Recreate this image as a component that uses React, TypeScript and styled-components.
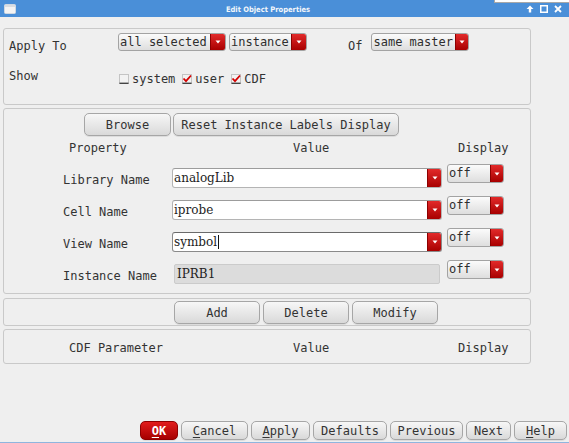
import React from "react";
import styled, { createGlobalStyle } from "styled-components";

const GlobalStyle = createGlobalStyle`
  html, body { margin: 0; padding: 0; background: #efefef; }
  body { font-family: "DejaVu Sans Mono", monospace; font-size: 12px; color: #333; }
`;

const Window = styled.div`
  width: 569px;
  height: 443px;
  box-sizing: border-box;
  display: flex;
  flex-direction: column;
  background: #efefef;
  border-bottom: 1px solid #8fb5de;
  position: relative;
  overflow: hidden;
`;

const TitleBar = styled.div`
  flex: none;
  height: 17px;
  background: #4a8fd8;
  display: flex;
  align-items: center;
  padding: 0 7px 0 4px;
  position: relative;
`;

const TitleText = styled.div`
  flex: 1;
  text-align: center;
  color: #f2f6fb;
  font-family: "DejaVu Sans", sans-serif;
  font-stretch: condensed;
  font-weight: bold;
  font-size: 7.5px;
  padding-top: 2px;
  padding-right: 6px;
`;

const TitleIcons = styled.div`
  display: flex;
  gap: 6px;
  align-items: center;
`;

const BehindStrip = styled.div`
  position: absolute;
  top: 0;
  left: 494px;
  right: 0;
  height: 2px;
  background: #ffffff;
  border-bottom: 1px solid #a8a8a8;
  border-left: 1px solid #a8a8a8;
`;

const Content = styled.div`
  display: flex;
  flex-direction: column;
  padding: 11px 38px 0 3px;
`;

const Panel = styled.div<{ $h: number; $mt?: number; $pt?: number }>`
  height: ${(p) => p.$h}px;
  margin-top: ${(p) => p.$mt ?? 0}px;
  padding-top: ${(p) => p.$pt ?? 0}px;
  box-sizing: border-box;
  border: 1px solid #c9c9c9;
  border-radius: 3px;
  background: #efefef;
  display: flex;
  flex-direction: column;
`;

const FlexRow = styled.div<{ $mt?: number; $pl?: number; $gap?: number }>`
  display: flex;
  align-items: flex-start;
  gap: ${(p) => p.$gap ?? 0}px;
  margin-top: ${(p) => p.$mt ?? 0}px;
  padding-left: ${(p) => p.$pl ?? 0}px;
`;

const FieldLabel = styled.div<{ $w?: number; $pt?: number; $ml?: number }>`
  width: ${(p) => (p.$w ? `${p.$w}px` : "auto")};
  padding-top: ${(p) => p.$pt ?? 0}px;
  margin-left: ${(p) => p.$ml ?? 0}px;
  line-height: 16px;
  white-space: nowrap;
  color: #333;
`;

const Select = styled.div<{ $w: number; $h: number; $ml?: number }>`
  width: ${(p) => p.$w}px;
  height: ${(p) => p.$h}px;
  margin-left: ${(p) => p.$ml ?? 0}px;
  box-sizing: border-box;
  display: flex;
  border: 1px solid #a3a3a3;
  border-radius: 3px;
  background: linear-gradient(#fbfbfb, #dedede);
  overflow: hidden;
  flex: none;
`;

const SelectText = styled.span<{ $h: number }>`
  flex: 1;
  padding-left: 1px;
  line-height: ${(p) => p.$h - 2}px;
  white-space: nowrap;
  overflow: hidden;
  color: #2e2e2e;
`;

const RedArrow = styled.span<{ $w: number }>`
  width: ${(p) => p.$w}px;
  flex: none;
  background: linear-gradient(#e22a2a, #a80000);
  border-left: 1px solid #8c0000;
  display: flex;
  align-items: center;
  justify-content: center;
`;

const CheckGroup = styled.div`
  display: flex;
  gap: 7px;
  padding-top: 3px;
`;

const CheckItem = styled.div`
  display: flex;
  align-items: center;
  gap: 3px;
  line-height: 16px;
`;

const Button = styled.div<{ $w: number; $h: number }>`
  width: ${(p) => p.$w}px;
  height: ${(p) => p.$h}px;
  box-sizing: border-box;
  border: 1px solid #a6a6a6;
  border-radius: 5px;
  background: linear-gradient(#f7f7f7, #d9d9d9);
  box-shadow: 0 1px 0 rgba(0, 0, 0, 0.08);
  display: flex;
  align-items: center;
  justify-content: center;
  color: #333;
  white-space: nowrap;
  flex: none;
`;

const OkButton = styled(Button)`
  border-color: #8e0000;
  background: linear-gradient(#e11c1c, #a60000);
  color: #ffffff;
  font-weight: bold;
`;

const Mnemonic = styled.span`
  text-decoration: underline;
  text-underline-offset: 2px;
`;

const HeaderGrid = styled.div<{ $mt: number }>`
  display: grid;
  grid-template-columns: 168px 275px 62px;
  margin-top: ${(p) => p.$mt}px;
  line-height: 16px;
  white-space: nowrap;
`;

const HeaderCell = styled.div<{ $pl: number }>`
  padding-left: ${(p) => p.$pl}px;
`;

const PropGrid = styled.div`
  display: grid;
  grid-template-columns: 168px 275px 57px;
  grid-auto-rows: 32px;
  margin-top: 8px;
`;

const PropLabel = styled.div`
  padding-left: 59px;
  line-height: 32px;
  white-space: nowrap;
`;

const ValueCell = styled.div`
  padding: 4px 5px 0 0;
`;

const ValueField = styled.div<{ $focus?: boolean }>`
  height: 20px;
  box-sizing: border-box;
  display: flex;
  background: #ffffff;
  border: 1px solid ${(p) => (p.$focus ? "#8a8a8a" : "#b4b4b4")};
  border-top-color: ${(p) => (p.$focus ? "#6a6a6a" : "#9c9c9c")};
  border-radius: 3px;
  overflow: hidden;
`;

const ReadOnlyField = styled.div`
  height: 20px;
  width: 266px;
  margin-left: 2px;
  box-sizing: border-box;
  background: #dcdcdc;
  border: 1px solid #cbcbcb;
  border-radius: 2px;
  display: flex;
`;

const ValueText = styled.span<{ $pl?: number }>`
  flex: 1;
  padding-left: ${(p) => p.$pl ?? 1}px;
  font-family: "DejaVu Serif", serif;
  font-size: 12px;
  line-height: 18px;
  color: #222;
  white-space: nowrap;
`;

const Caret = styled.span`
  display: inline-block;
  width: 1px;
  height: 14px;
  background: #111;
  vertical-align: -3px;
  margin-left: 1px;
`;

const Footer = styled.div`
  margin-top: auto;
  display: flex;
  justify-content: flex-end;
  gap: 3px;
  padding: 0 2px 2px 0;
`;

const ArrowGlyph = () => (
  <svg width="6" height="4" viewBox="0 0 6 4">
    <polygon points="0.5,0.5 5.5,0.5 3,3.5" fill="#ffffff" />
  </svg>
);

const Dropdown = ({
  w,
  h,
  text,
  arrow,
  ml,
}: {
  w: number;
  h: number;
  text: string;
  arrow: number;
  ml?: number;
}) => (
  <Select $w={w} $h={h} $ml={ml}>
    <SelectText $h={h}>{text}</SelectText>
    <RedArrow $w={arrow}>
      <ArrowGlyph />
    </RedArrow>
  </Select>
);

const CheckBox = ({ checked }: { checked: boolean }) => (
  <svg width="10" height="10" viewBox="0 0 10 10">
    <rect x="0.5" y="0.5" width="9" height="9" fill="#f2f2f2" stroke="#c4c4c4" />
    <line x1="0.5" y1="9.3" x2="9.5" y2="9.3" stroke="#444" strokeWidth="1.4" />
    {checked && (
      <polyline
        points="1.5,4.5 4,7.2 9,1.5"
        fill="none"
        stroke="#d40000"
        strokeWidth="1.8"
      />
    )}
  </svg>
);

const WindowIcon = () => (
  <svg width="12" height="10" viewBox="0 0 12 10">
    <rect x="0.5" y="0.5" width="11" height="9" rx="1" fill="#f4f4f4" stroke="#cfd8e2" />
    <rect x="1" y="1" width="10" height="2" fill="#d9dde2" />
  </svg>
);

const UpIcon = () => (
  <svg width="8" height="8" viewBox="0 0 8 8">
    <polygon points="4,0.5 7.5,4 5.2,4 5.2,7.5 2.8,7.5 2.8,4 0.5,4" fill="#ffffff" />
  </svg>
);

const MaxIcon = () => (
  <svg width="8" height="8" viewBox="0 0 8 8">
    <rect x="0.75" y="0.75" width="6.5" height="6.5" fill="none" stroke="#ffffff" strokeWidth="1.5" />
  </svg>
);

const CloseIcon = () => (
  <svg width="8" height="8" viewBox="0 0 8 8">
    <path d="M1 1 L7 7 M7 1 L1 7" stroke="#ffffff" strokeWidth="1.8" />
  </svg>
);

const rows = [
  { label: "Library Name", value: "analogLib" },
  { label: "Cell Name", value: "iprobe" },
  { label: "View Name", value: "symbol", focus: true },
];

export default function App() {
  return (
    <>
      <GlobalStyle />
      <Window>
        <TitleBar>
          <WindowIcon />
          <TitleText>Edit Object Properties</TitleText>
          <TitleIcons>
            <UpIcon />
            <MaxIcon />
            <CloseIcon />
          </TitleIcons>
          <BehindStrip />
        </TitleBar>
        <Content>
          <Panel $h={77} $pt={4}>
            <FlexRow $pl={5}>
              <FieldLabel $w={109} $pt={5}>
                Apply To
              </FieldLabel>
              <Dropdown w={108} h={18} text="all selected" arrow={14} />
              <Dropdown w={78} h={18} text="instance" arrow={14} ml={3} />
              <FieldLabel $pt={5} $ml={41}>
                Of
              </FieldLabel>
              <Dropdown w={98} h={18} text="same master" arrow={12} ml={9} />
            </FlexRow>
            <FlexRow $pl={5} $mt={14}>
              <FieldLabel $w={110}>Show</FieldLabel>
              <CheckGroup>
                <CheckItem>
                  <CheckBox checked={false} />
                  system
                </CheckItem>
                <CheckItem>
                  <CheckBox checked />
                  user
                </CheckItem>
                <CheckItem>
                  <CheckBox checked />
                  CDF
                </CheckItem>
              </CheckGroup>
            </FlexRow>
          </Panel>

          <Panel $h={186} $mt={3} $pt={4}>
            <FlexRow $pl={80} $gap={2}>
              <Button $w={87} $h={23}>Browse</Button>
              <Button $w={226} $h={23}>Reset Instance Labels Display</Button>
            </FlexRow>
            <HeaderGrid $mt={4}>
              <HeaderCell $pl={65}>Property</HeaderCell>
              <HeaderCell $pl={121}>Value</HeaderCell>
              <HeaderCell $pl={11}>Display</HeaderCell>
            </HeaderGrid>
            <PropGrid>
              {rows.map((r) => (
                <React.Fragment key={r.label}>
                  <PropLabel>{r.label}</PropLabel>
                  <ValueCell>
                    <ValueField $focus={r.focus}>
                      <ValueText>
                        {r.value}
                        {r.focus && <Caret />}
                      </ValueText>
                      <RedArrow $w={13}>
                        <ArrowGlyph />
                      </RedArrow>
                    </ValueField>
                  </ValueCell>
                  <Dropdown w={57} h={19} text="off" arrow={12} />
                </React.Fragment>
              ))}
              <PropLabel>Instance Name</PropLabel>
              <ValueCell>
                <ReadOnlyField>
                  <ValueText $pl={2}>IPRB1</ValueText>
                </ReadOnlyField>
              </ValueCell>
              <Dropdown w={57} h={19} text="off" arrow={12} />
            </PropGrid>
          </Panel>

          <Panel $h={28} $mt={4} $pt={2}>
            <FlexRow $pl={170} $gap={3}>
              <Button $w={86} $h={23}>Add</Button>
              <Button $w={86} $h={23}>Delete</Button>
              <Button $w={86} $h={23}>Modify</Button>
            </FlexRow>
          </Panel>

          <Panel $h={35} $mt={3} $pt={10}>
            <HeaderGrid $mt={0}>
              <HeaderCell $pl={65}>CDF Parameter</HeaderCell>
              <HeaderCell $pl={121}>Value</HeaderCell>
              <HeaderCell $pl={11}>Display</HeaderCell>
            </HeaderGrid>
          </Panel>
        </Content>

        <Footer>
          <OkButton $w={38} $h={19}>
            <Mnemonic>O</Mnemonic>K
          </OkButton>
          <Button $w={67} $h={19}>
            <Mnemonic>C</Mnemonic>ancel
          </Button>
          <Button $w={59} $h={19}>
            <Mnemonic>A</Mnemonic>pply
          </Button>
          <Button $w={74} $h={19}>Defaults</Button>
          <Button $w={73} $h={19}>Previous</Button>
          <Button $w={45} $h={19}>Next</Button>
          <Button $w={53} $h={19}>
            <Mnemonic>H</Mnemonic>elp
          </Button>
        </Footer>
      </Window>
    </>
  );
}
